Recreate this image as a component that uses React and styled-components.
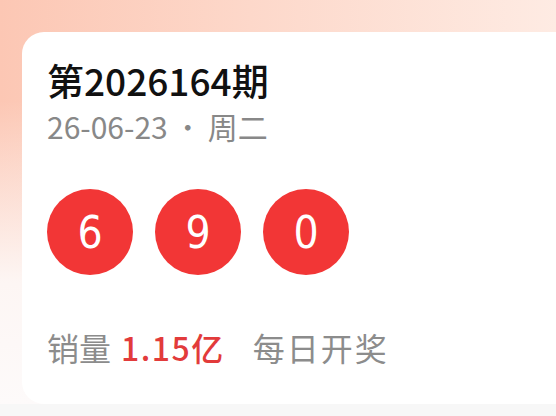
import styled, { createGlobalStyle } from "styled-components"

const GlobalStyle = createGlobalStyle`
  html, body {
    margin: 0;
    padding: 0;
    background: #f7f7f7;
    font-family: "Noto Sans CJK SC", "Noto Sans", sans-serif;
  }
`

const Page = styled.div`
  width: 556px;
  height: 404px;
  overflow: hidden;
  padding: 32px 0 0 22px;
  box-sizing: border-box;
  background:
    linear-gradient(180deg, rgba(255, 250, 248, 0) 0%, rgba(255, 250, 248, 0) 25%, #fdf6f4 70%, #fdfafa 100%),
    linear-gradient(90deg, #fcc7b4 0%, #fdd8ca 45%, #feebe3 100%);
`

const Card = styled.div`
  width: 560px;
  height: 372px;
  background: #ffffff;
  border-radius: 22px 0 0 22px;
  padding: 25px 0 0 25px;
  box-sizing: border-box;
  display: flex;
  flex-direction: column;
`

const Title = styled.h1`
  margin: 0;
  font-size: 37px;
  line-height: 46px;
  font-weight: 500;
  color: #111111;
`

const DateLine = styled.div`
  margin-top: 5px;
  font-size: 30px;
  line-height: 36px;
  color: #888888;
`

const Dot = styled.span`
  margin: 0 5px;
  font-weight: 300;
`

const Balls = styled.div`
  display: flex;
  gap: 22px;
  margin-top: 45px;
`

const Ball = styled.div`
  width: 86px;
  height: 86px;
  border-radius: 50%;
  background: #f23636;
  color: #ffffff;
  display: flex;
  align-items: center;
  justify-content: center;
  font-family: "Liberation Sans Narrow", "DejaVu Sans Condensed", "Liberation Sans", sans-serif;
  font-size: 44px;
`

const Footer = styled.div`
  margin-top: 52px;
  display: flex;
  align-items: baseline;
  font-size: 32px;
  line-height: 40px;
  color: #8c8c8c;
`

const Sales = styled.span`
  color: #e23b3b;
  margin-left: 10px;
  font-weight: 500;
  letter-spacing: 1.5px;
`

const Schedule = styled.span`
  margin-left: 28px;
  letter-spacing: 2px;
`

function App() {
  return (
    <>
      <GlobalStyle />
      <Page>
        <Card>
          <Title>第2026164期</Title>
          <DateLine>
            26-06-23<Dot>·</Dot>周二
          </DateLine>
          <Balls>
            {[6, 9, 0].map((n, i) => (
              <Ball key={i}>{n}</Ball>
            ))}
          </Balls>
          <Footer>
            销量<Sales>1.15亿</Sales>
            <Schedule>每日开奖</Schedule>
          </Footer>
        </Card>
      </Page>
    </>
  )
}

export default App
